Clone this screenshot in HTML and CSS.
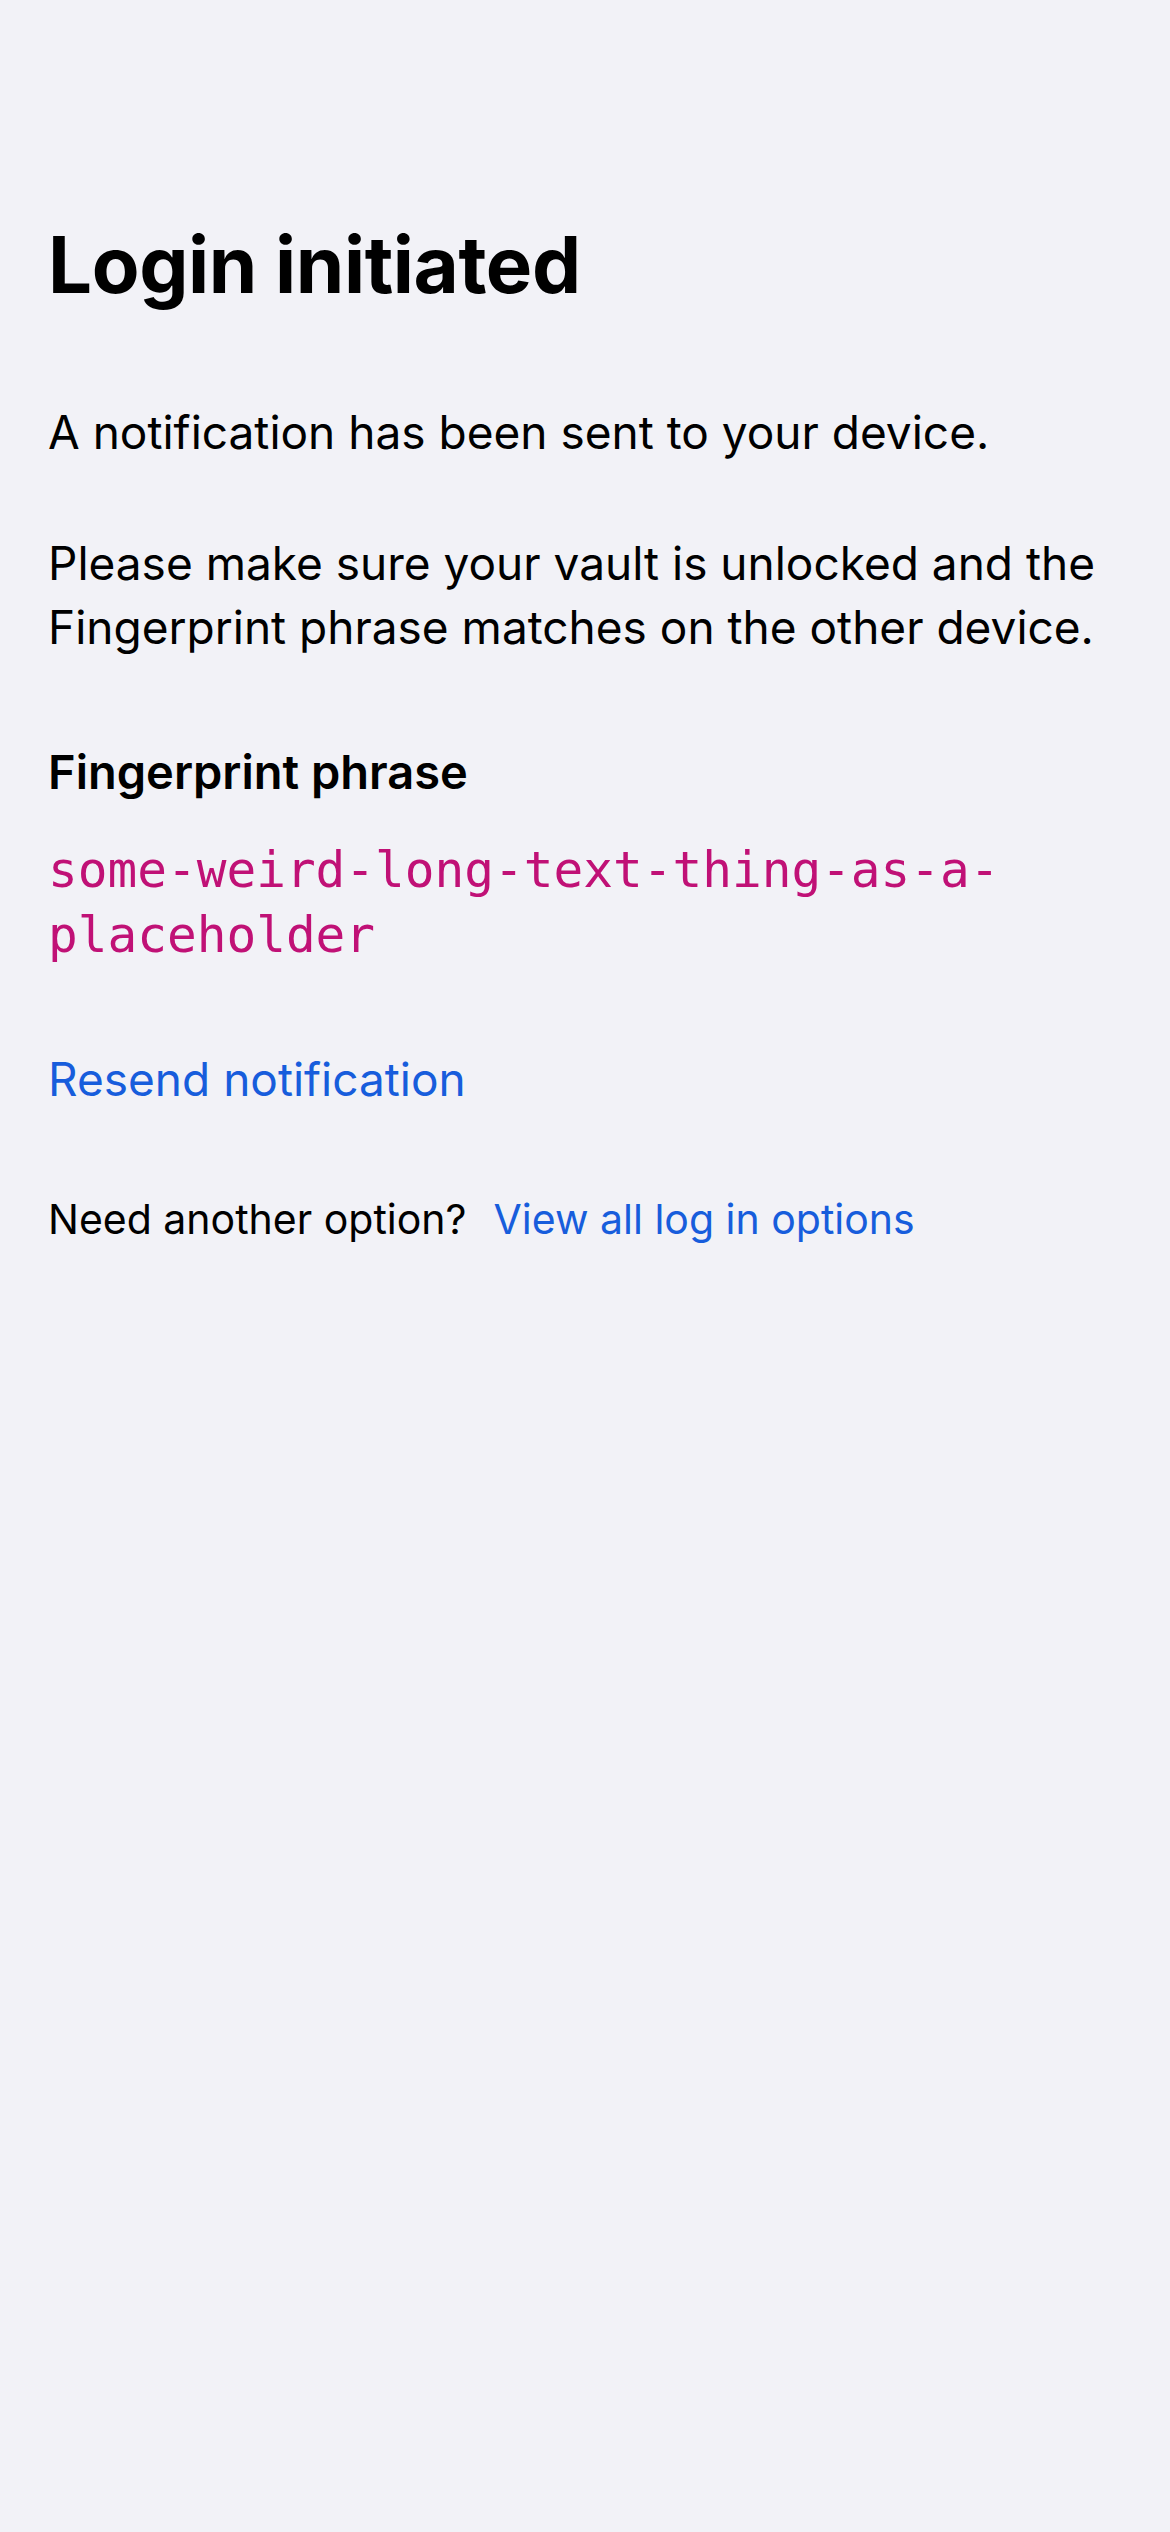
FILE: index.html
```html
<!DOCTYPE html>
<html lang="en">
<head>
<meta charset="utf-8">
<title>Login initiated</title>
<link rel="stylesheet" href="styles.css">
</head>
<body>
<main class="screen">
  <h1 class="title">Login initiated</h1>
  <p class="body-text first">A notification has been sent to your device.</p>
  <p class="body-text second">Please make sure your vault is unlocked and the Fingerprint phrase matches on the other device.</p>
  <h2 class="label">Fingerprint phrase</h2>
  <p class="phrase">some-weird-long-text-thing-as-a-placeholder</p>
  <a class="resend" href="#">Resend notification</a>
  <div class="footer">
    <span class="footer-text">Need another option?</span>
    <a class="footer-link" href="#">View all log in options</a>
  </div>
</main>
</body>
</html>
```

FILE: styles.css
```css
html, body {
  margin: 0;
  padding: 0;
  background: #F2F2F7;
}

body {
  width: 1170px;
  min-height: 2532px;
  font-family: Inter, "Noto Sans", "Liberation Sans", sans-serif;
  color: #000;
}

.screen {
  display: flex;
  flex-direction: column;
  align-items: flex-start;
  padding: 218px 48px 0 48px;
}

.title {
  margin: 0;
  font-size: 78px;
  font-weight: 700;
  line-height: 94px;
  letter-spacing: -0.4px;
}

.body-text {
  margin: 0;
  font-size: 46px;
  font-weight: 400;
  line-height: 64px;
}

.body-text.first {
  margin-top: 88px;
}

.body-text.second {
  margin-top: 67px;
}

.label {
  margin: 81px 0 0 0;
  font-size: 47px;
  font-weight: 600;
  line-height: 64px;
}

.phrase {
  margin: 34px 0 0 0;
  font-family: "DejaVu Sans Mono", "Liberation Mono", monospace;
  font-size: 49.4px;
  line-height: 65px;
  color: #C01176;
  max-width: 1040px;
}

.resend {
  margin-top: 79px;
  font-size: 46px;
  line-height: 64px;
  color: #175DDC;
  text-decoration: none;
}

.footer {
  margin-top: 80px;
  display: flex;
  align-items: baseline;
  gap: 27px;
  font-size: 41px;
  line-height: 56px;
}

.footer-link {
  color: #175DDC;
  text-decoration: none;
}
```
